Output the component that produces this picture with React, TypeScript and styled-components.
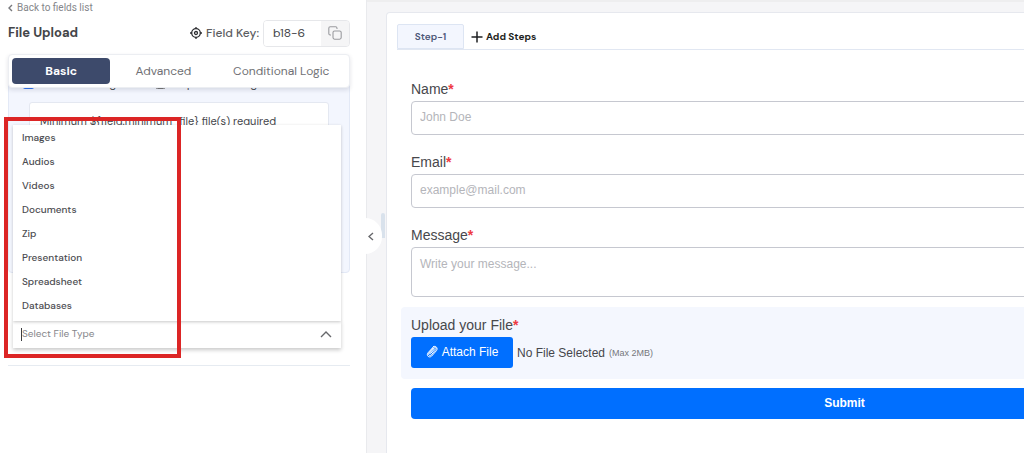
import React from "react";
import styled, { createGlobalStyle } from "styled-components";

const GlobalStyle = createGlobalStyle`
  *, *::before, *::after { box-sizing: border-box; }
  body { margin: 0; background: #fff; font-family: "DM Sans", Inter, "Liberation Sans", sans-serif; color: #45464b; }
  button, input, textarea { font: inherit; color: inherit; margin: 0; }
  button { cursor: pointer; }
`;

const Page = styled.div`
  display: flex;
  min-height: 100vh;
  overflow: hidden;
`;

/* ---------- Left settings sidebar ---------- */

const Sidebar = styled.aside`
  position: relative;
  z-index: 1;
  flex: 0 0 366px;
  padding: 0 16px 0 8px;
  background: #fff;
`;

const BackLink = styled.a`
  display: flex;
  align-items: center;
  gap: 4px;
  height: 15px;
  font: 10px/14px Roboto, sans-serif;
  color: #85868a;
  text-decoration: none;
`;

const FieldHeader = styled.header`
  display: flex;
  align-items: center;
  height: 36px;
`;

const FieldTitle = styled.h1`
  flex: 1;
  margin: 0;
  font-size: 13px;
  line-height: 20px;
  font-weight: 700;
  color: #444549;
`;

const KeyLabel = styled.label`
  display: flex;
  align-items: center;
  gap: 4px;
  margin-right: 4px;
  font-size: 12px;
  line-height: 20px;
  font-weight: 500;
  color: #5c5d61;
`;

const KeyGroup = styled.div`
  display: flex;
  width: 87px;
  height: 27px;
  border: 1px solid #e6e7ea;
  border-radius: 4px;
  overflow: hidden;
`;

const KeyInput = styled.input`
  flex: 1;
  min-width: 0;
  padding: 0 0 0 9px;
  border: 0;
  outline: 0;
  font-size: 12px;
  font-weight: 400;
`;

const CopyButton = styled.button`
  display: grid;
  place-items: center;
  width: 28px;
  padding: 0;
  border: 0;
  background: #f5f5f6;
`;

const SettingsPanel = styled.section`
  border-bottom: 1px solid #e6ebf1;
  padding-bottom: 17px;
`;

const SettingsTabs = styled.div`
  position: relative;
  z-index: 2;
  display: flex;
  align-items: center;
  height: 34px;
  margin-top: 3px;
  padding: 0 3px;
  background: #fff;
  border: 1px solid #eceef2;
  border-radius: 4px;
  box-shadow: 0 2px 4px rgba(40, 50, 80, 0.14);
`;

const SettingsTab = styled.button<{ $active?: boolean; $grow: number }>`
  flex: ${(p) => p.$grow} 1 0;
  height: 26px;
  padding: 0;
  border: 0;
  border-radius: 4px;
  font-size: 12px;
  line-height: 16px;
  font-weight: ${(p) => (p.$active ? 700 : 400)};
  color: ${(p) => (p.$active ? "#fff" : "#707175")};
  background: ${(p) => (p.$active ? "#3d4a6b" : "transparent")};
`;

const RuleGroup = styled.div`
  height: 200px;
  margin-top: -15px;
  padding: 2px 20px 0;
  border: 1px solid #e3e9f6;
  border-radius: 4px;
  background: #f3f6fe;
`;

const RuleRow = styled.div`
  display: grid;
  grid-template-columns: 132px 1fr;
  margin-left: -6px;
`;

const RuleOption = styled.label`
  display: flex;
  align-items: center;
  gap: 4px;
  height: 14px;
  font-size: 11px;
  line-height: 14px;
  white-space: nowrap;
`;

const RuleCheck = styled.input`
  width: 11px;
  height: 11px;
  margin: 0;
  accent-color: #2f73f0;
`;

const RuleMessage = styled.input`
  width: 100%;
  height: 38px;
  margin-top: 12px;
  padding: 0 10px;
  border: 1px solid #e4e8f1;
  border-radius: 3px;
  outline: 0;
  background: #fff;
  font-size: 11px;
`;

const FileTypeSelect = styled.div`
  position: relative;
  z-index: 1;
  display: flex;
  align-items: center;
  height: 28px;
  margin: 47px 9px 0 5px;
  padding: 0 9px 0 8px;
  background: #fff;
  border-top: 1px solid #dfe0e3;
  box-shadow: 0 2px 4px rgba(0, 0, 0, 0.22);
`;

const Caret = styled.span`
  width: 1px;
  height: 13px;
  background: #3c3d40;
`;

const FileTypeInput = styled.input`
  flex: 1;
  min-width: 0;
  padding: 0 0 2px;
  border: 0;
  outline: 0;
  background: transparent;
  font-size: 10px;
  line-height: 16px;
  &::placeholder { color: #85868a; opacity: 1; }
`;

const FileTypeMenu = styled.ul`
  position: absolute;
  left: 0;
  right: 0;
  bottom: 100%;
  margin: 0;
  padding: 1px 0 3px;
  list-style: none;
  background: #fff;
  box-shadow: 0 1px 3px rgba(0, 0, 0, 0.22);
`;

const FileTypeOption = styled.li`
  padding: 0 9px;
  font-size: 10px;
  line-height: 24px;
  font-weight: 500;
  color: #4b4c50;
`;

const Highlight = styled.div`
  position: absolute;
  z-index: 3;
  left: 4px;
  top: 117px;
  width: 177px;
  height: 241px;
  border: 4px solid #dc2525;
  pointer-events: none;
`;

const CollapseButton = styled.button`
  position: absolute;
  right: -16px;
  top: 218px;
  display: flex;
  align-items: center;
  justify-content: flex-end;
  width: 17px;
  height: 36px;
  padding: 0 8px 0 0;
  border: 0;
  border-radius: 0 18px 18px 0;
  background: #fff;
`;

/* ---------- Form preview ---------- */

const Preview = styled.main`
  position: relative;
  flex: 1;
  min-width: 0;
  display: flex;
  padding: 12px 0 0 19px;
  background: #f5f5f7;
  border-left: 1px solid #e9eaed;
  box-shadow: inset 0 2px 0 #eeeeef;
`;

const ScrollThumb = styled.span`
  position: absolute;
  left: 14px;
  top: 213px;
  width: 4px;
  height: 25px;
  border-radius: 2px 2px 0 0;
  background: #d9e2ec;
`;

const PreviewCard = styled.div`
  flex: 1 0 auto;
  width: calc(100% + 279px);
  padding: 11px 10px 0;
  background: #fff;
  border: 1px solid #e6e8ee;
  border-bottom: 0;
  border-radius: 4px 4px 0 0;
`;

const StepBar = styled.div`
  display: flex;
  height: 26px;
  border-bottom: 1px solid #e1e7f2;
`;

const StepTab = styled.button`
  width: 67px;
  padding: 0;
  border: 1px solid #dde5f3;
  border-radius: 2px 2px 0 0;
  background: #f3f6fe;
  font-size: 10px;
  font-weight: 600;
  color: #4d5878;
`;

const AddStep = styled.button`
  display: flex;
  align-items: center;
  gap: 3px;
  padding: 0 7px;
  border: 0;
  background: transparent;
  font-size: 10px;
  font-weight: 700;
  color: #1e1f22;
`;

const Form = styled.form`
  padding: 29px 4px 0;
  font-family: "Liberation Sans", Arial, sans-serif;
`;

const Field = styled.div`
  display: flex;
  flex-direction: column;
  gap: 2px;
  padding: 0 10px;
  margin-bottom: 17px;
`;

const MessageField = styled(Field)`
  margin-bottom: 10px;
`;

const FieldLabel = styled.label`
  font-size: 14px;
  line-height: 20px;
  color: #47484c;
`;

const Required = styled.span`
  font-weight: 700;
  color: #ee3a42;
`;

const TextInput = styled.input`
  height: 34px;
  padding: 0 8px 2px;
  border: 1px solid #c6c8d0;
  border-radius: 4px;
  font-size: 12px;
  &::placeholder { color: #b4b5ba; opacity: 1; }
`;

const TextArea = styled.textarea`
  height: 50px;
  padding: 8px;
  border: 1px solid #c6c8d0;
  border-radius: 4px;
  font-size: 12px;
  line-height: 16px;
  resize: none;
  &::placeholder { color: #b4b5ba; opacity: 1; }
`;

const UploadField = styled.div`
  display: flex;
  flex-direction: column;
  gap: 2px;
  padding: 8px 10px 11px;
  background: #f4f7fe;
  border-radius: 4px;
`;

const UploadRow = styled.div`
  display: flex;
  align-items: center;
  gap: 4px;
  font-size: 12px;
`;

const AttachButton = styled.button`
  display: flex;
  align-items: center;
  justify-content: center;
  gap: 4px;
  width: 102px;
  height: 31px;
  padding: 0 0 2px;
  border: 0;
  border-radius: 3px;
  background: #006fff;
  color: #fff;
  font-size: 12px;
`;

const SizeHint = styled.small`
  font-size: 9px;
  color: #76777c;
`;

const SubmitButton = styled.button`
  display: block;
  width: calc(100% - 20px);
  height: 31px;
  margin: 9px 10px 0;
  padding: 0 0 2px;
  border: 0;
  border-radius: 4px;
  background: #006fff;
  color: #fff;
  font-size: 12px;
  font-weight: 700;
`;

const Chevron = ({ dir, w, h, color }: { dir: "left" | "up"; w: number; h: number; color: string }) => (
  <svg width={w} height={h} viewBox={`0 0 ${w} ${h}`} fill="none" stroke={color} strokeWidth="1.4" aria-hidden="true">
    <path d={dir === "left" ? `M${w - 1} 1L1 ${h / 2}L${w - 1} ${h - 1}` : `M1 ${h - 1}L${w / 2} 1L${w - 1} ${h - 1}`} />
  </svg>
);

const TargetIcon = () => (
  <svg width="12" height="12" viewBox="0 0 12 12" fill="none" stroke="#2e2f33" strokeWidth="1.3" aria-hidden="true">
    <circle cx="6" cy="6" r="4.3" />
    <circle cx="6" cy="6" r="1.5" />
    <path d="M6 0v2M6 10v2M0 6h2M10 6h2" />
  </svg>
);

const CopyIcon = () => (
  <svg width="14" height="14" viewBox="0 0 14 14" fill="none" stroke="#9a9b9f" strokeWidth="1.1" aria-hidden="true">
    <rect x="5" y="5" width="8.2" height="8.2" rx="1.6" />
    <path d="M3 9H2.2C1.4 9 .8 8.4 .8 7.6V2.2C.8 1.4 1.4.8 2.2.8h5.4C8.4.8 9 1.4 9 2.2V3" />
  </svg>
);

const PlusIcon = () => (
  <svg width="12" height="12" viewBox="0 0 12 12" stroke="#1e1f22" strokeWidth="1.5" aria-hidden="true">
    <path d="M6 .5v11M.5 6h11" />
  </svg>
);

const ClipIcon = () => (
  <svg width="12" height="13" viewBox="0 0 12 13" fill="none" stroke="#fff" strokeWidth="1" strokeLinecap="round" aria-hidden="true">
    <path d="M8.4 4.1L4.5 8.6c-.5.6-1.3.1-.8-.6l4.4-5c1.1-1.2 2.8.1 1.8 1.4L5.4 9.8c-1.6 1.7-3.9-.1-2.5-1.9L7 3.1" />
    <path d="M7.6 1.6L2 7.8c-2.2 2.7 1.3 5.7 3.7 3.2l4.8-5.4c1.8-2.4-.8-5.4-2.9-4Z" />
  </svg>
);

const fileTypes = ["Images", "Audios", "Videos", "Documents", "Zip", "Presentation", "Spreadsheet", "Databases"];

export default function App() {
  return (
    <Page>
      <GlobalStyle />
      <Sidebar>
        <BackLink href="#fields">
          <Chevron dir="left" w={5} h={8} color="#77787c" />
          Back to fields list
        </BackLink>
        <FieldHeader>
          <FieldTitle>File Upload</FieldTitle>
          <KeyLabel htmlFor="field-key">
            <TargetIcon />
            Field Key:
          </KeyLabel>
          <KeyGroup>
            <KeyInput id="field-key" defaultValue="b18-6" />
            <CopyButton type="button" aria-label="Copy field key">
              <CopyIcon />
            </CopyButton>
          </KeyGroup>
        </FieldHeader>
        <SettingsPanel>
          <SettingsTabs role="tablist">
            <SettingsTab role="tab" aria-selected="true" $active $grow={98}>Basic</SettingsTab>
            <SettingsTab role="tab" aria-selected="false" $grow={106}>Advanced</SettingsTab>
            <SettingsTab role="tab" aria-selected="false" $grow={129}>Conditional Logic</SettingsTab>
          </SettingsTabs>
          <RuleGroup>
            <RuleRow>
              <RuleOption>
                <RuleCheck type="checkbox" defaultChecked />
                Default Message
              </RuleOption>
              <RuleOption>
                <RuleCheck type="checkbox" />
                Required Message
              </RuleOption>
            </RuleRow>
            <RuleMessage aria-label="Minimum files message" defaultValue="Minimum ${field.minimum_file} file(s) required" />
          </RuleGroup>
          <FileTypeSelect>
            <Caret />
            <FileTypeInput role="combobox" aria-expanded="true" aria-controls="file-types" aria-label="File type" placeholder="Select File Type" />
            <Chevron dir="up" w={12} h={7} color="#66676b" />
            <FileTypeMenu id="file-types" role="listbox">
              {fileTypes.map((type) => (
                <FileTypeOption key={type} role="option">{type}</FileTypeOption>
              ))}
            </FileTypeMenu>
          </FileTypeSelect>
        </SettingsPanel>
        <Highlight />
        <CollapseButton type="button" aria-label="Collapse sidebar">
          <Chevron dir="left" w={6} h={9} color="#66676b" />
        </CollapseButton>
      </Sidebar>
      <Preview>
        <ScrollThumb />
        <PreviewCard>
          <StepBar>
            <StepTab type="button">Step-1</StepTab>
            <AddStep type="button">
              <PlusIcon />
              Add Steps
            </AddStep>
          </StepBar>
          <Form>
            <Field>
              <FieldLabel htmlFor="name">Name<Required>*</Required></FieldLabel>
              <TextInput id="name" placeholder="John Doe" />
            </Field>
            <Field>
              <FieldLabel htmlFor="email">Email<Required>*</Required></FieldLabel>
              <TextInput id="email" type="email" placeholder="example@mail.com" />
            </Field>
            <MessageField>
              <FieldLabel htmlFor="message">Message<Required>*</Required></FieldLabel>
              <TextArea id="message" placeholder="Write your message..." />
            </MessageField>
            <UploadField>
              <FieldLabel htmlFor="attach">Upload your File<Required>*</Required></FieldLabel>
              <UploadRow>
                <AttachButton id="attach" type="button">
                  <ClipIcon />
                  Attach File
                </AttachButton>
                <span>No File Selected</span>
                <SizeHint>(Max 2MB)</SizeHint>
              </UploadRow>
            </UploadField>
            <SubmitButton type="button">Submit</SubmitButton>
          </Form>
        </PreviewCard>
      </Preview>
    </Page>
  );
}
